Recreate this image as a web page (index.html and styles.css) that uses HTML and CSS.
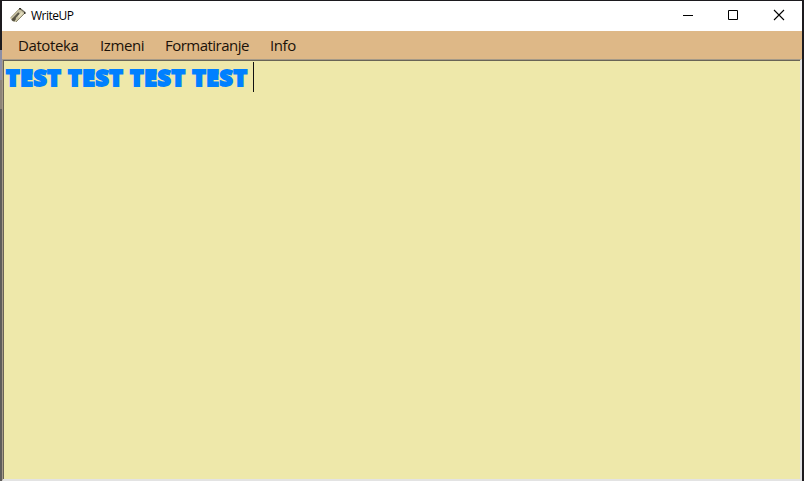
FILE: index.html
```html
<!DOCTYPE html>
<html lang="sr-Latn">
<head>
<meta charset="utf-8">
<title>WriteUP</title>
<link rel="stylesheet" href="styles.css">
</head>
<body>
<div class="window">
  <header class="titlebar">
    <svg class="app-icon" width="18" height="18" viewBox="0 0 18 18">
      <path d="M0 11L9 2L11 2L15 6L6 15L3 14Z" fill="#c9c3a4"/>
      <path d="M1 10.500L9 2" stroke="#a5a087"/>
      <path d="M2 13.500L9 6" stroke="#5b574a" stroke-width="2"/>
      <path d="M2 12L5 10L6 12L4 15Z" fill="#55513f"/>
      <path d="M15 6L6 15" stroke="#8d886e"/>
      <path d="M10 1.500L15 5.500" stroke="#6b6755" stroke-width="1.3"/>
      <path d="M9 1h2v1.500H9zM14 5h1.500v2H14z" fill="#37342c"/>
      <path d="M8 9L11.500 5L13 6.500L9 11Z" fill="#e4dec0"/>
    </svg>
    <span class="title">WriteUP</span>
    <div class="controls">
      <svg width="45" height="30"><path d="M18 14.500h10" stroke="#000"/></svg>
      <svg width="45" height="30"><path d="M18.500 9.500h9v9h-9z" fill="none" stroke="#000"/></svg>
      <svg width="45" height="30"><path d="M19 9l10 10M29 9L19 19" stroke="#000" stroke-width="1.1"/></svg>
    </div>
  </header>
  <nav class="menu">
    <span class="item datoteka">Datoteka</span>
    <span class="item izmeni">Izmeni</span>
    <span class="item formatiranje">Formatiranje</span>
    <span class="item info">Info</span>
  </nav>
  <main class="editor">
    <span class="text">TEST TEST TEST TEST</span>
    <span class="caret"></span>
  </main>
</div>
</body>
</html>
```
FILE: styles.css
```css
* { box-sizing: border-box; }
body {
  margin: 0;
  height: 481px;
  overflow: hidden;
  padding: 1px 2px 0;
  background: linear-gradient(90deg, transparent 2px, #1c1a1e 2px),
    linear-gradient(#1c1a1e 50px, #8b8ea6 50px, #8b8ea6 80px, #8d8478 80px, #8d8478 109px, #5f5d5b 109px);
  font-family: "Open Sans", sans-serif;
  color: #1b1209;
}
.window {
  display: flex;
  flex-direction: column;
  height: 480px;
  background: #fff;
}
.titlebar {
  display: flex;
  height: 30px;
  align-items: center;
  padding: 0 2px 0 8px;
  color: #000;
}
.app-icon { flex: none; }
.title {
  margin-left: 3px;
  width: 44px;
  font: 12px/16px "Open Sans", sans-serif;
  letter-spacing: -0.5px;
}
.controls { display: flex; margin-left: auto; }
.menu {
  display: flex;
  height: 28px;
  align-items: center;
  padding-left: 16px;
  background: #deb887;
  font-size: 15px;
  line-height: 20px;
  white-space: nowrap;
}
.item { flex: none; letter-spacing: -0.4px; }
.datoteka { width: 82px; }
.izmeni { width: 65px; }
.formatiranje { width: 105px; letter-spacing: -0.52px; }
.editor {
  display: flex;
  flex: 1;
  align-items: flex-start;
  border-style: solid;
  border-width: 1px 2px 2px 1px;
  border-color: #a59a88 #e3e3e3 #e3e3e3 #a59a88;
  box-shadow: inset 1px 1px #696456;
  background: #eee8aa;
}
.text {
  width: 249px;
  padding: 3px 0 0 3px;
  font: 800 23px/28px "Open Sans", sans-serif;
  letter-spacing: 0.6px;
  white-space: pre;
  color: #0080ff;
  -webkit-text-stroke: 1.8px #0080ff;
}
.caret { width: 1px; height: 30px; margin-top: 2px; margin-left: 1px; background: #111; }
```
